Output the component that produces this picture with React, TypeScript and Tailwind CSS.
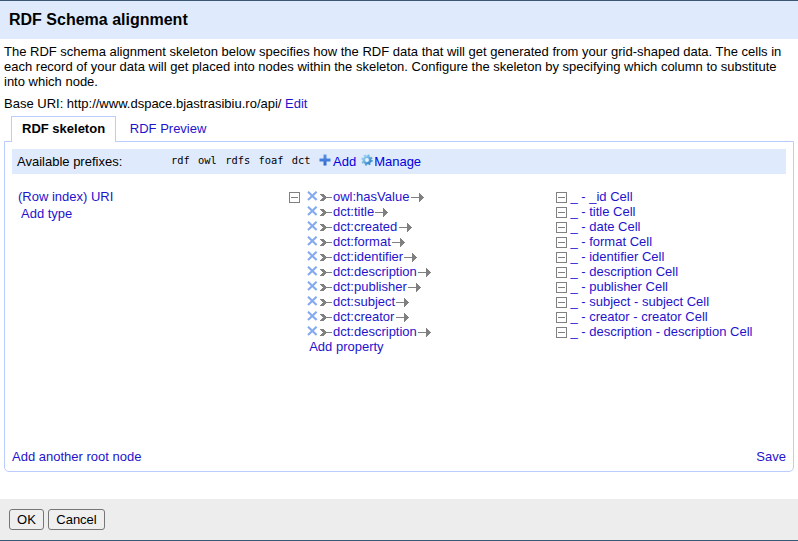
import React from "react";

const rows: { property: string; cell: string }[] = [
  { property: "owl:hasValue", cell: "_ - _id Cell" },
  { property: "dct:title", cell: "_ - title Cell" },
  { property: "dct:created", cell: "_ - date Cell" },
  { property: "dct:format", cell: "_ - format Cell" },
  { property: "dct:identifier", cell: "_ - identifier Cell" },
  { property: "dct:description", cell: "_ - description Cell" },
  { property: "dct:publisher", cell: "_ - publisher Cell" },
  { property: "dct:subject", cell: "_ - subject - subject Cell" },
  { property: "dct:creator", cell: "_ - creator - creator Cell" },
  { property: "dct:description", cell: "_ - description - description Cell" },
];

const prefixes = ["rdf", "owl", "rdfs", "foaf", "dct"];

function CollapseIcon() {
  return (
    <svg className="mt-[3px] block h-[11px] w-[11px] shrink-0" viewBox="0 0 11 11" shapeRendering="crispEdges">
      <path d="M0 0H11V11H0ZM1 1V10H10V1Z" fill="#808080" fillRule="evenodd" />
      <path d="M2 5H9V6H2Z" fill="#808080" />
    </svg>
  );
}

function RemoveIcon() {
  return (
    <svg className="mt-[2px] block h-[10px] w-[11px] shrink-0" viewBox="0 0 11 10">
      <path d="M1 0.7L9.6 9.1M9.6 0.7L1 9.1" stroke="#85aaf0" strokeWidth="2.1" fill="none" />
    </svg>
  );
}

function ArrowStart() {
  return (
    <svg className="ml-[2px] mt-[5px] block h-[7px] w-[12px] shrink-0" viewBox="0 0 12 7" shapeRendering="crispEdges">
      <path d="M0 0H4V1H5V2H6V3H12V4H6V5H5V6H4V7H0V6H1V5H2V4H3V3H2V2H1V1H0Z" fill="#808080" />
    </svg>
  );
}

function ArrowEnd() {
  return (
    <svg className="ml-[1.25px] mt-[4px] block h-[9px] w-[13px] shrink-0" viewBox="0 0 13 9" shapeRendering="crispEdges">
      <path d="M0 4H8V0H9V1H10V2H11V3H12V4H13V5H12V6H11V7H10V8H9V9H8V5H0Z" fill="#808080" />
    </svg>
  );
}

function PlusIcon() {
  return (
    <svg className="block h-[12px] w-[12px] shrink-0" viewBox="0 0 12 12">
      <defs>
        <linearGradient id="plus" x1="0" y1="0" x2="0" y2="1">
          <stop offset="0" stopColor="#5c96e6" />
          <stop offset="1" stopColor="#2d66cf" />
        </linearGradient>
      </defs>
      <path d="M4.5 0.5H7.5V4.5H11.5V7.5H7.5V11.5H4.5V7.5H0.5V4.5H4.5Z" fill="url(#plus)" />
    </svg>
  );
}

function GearIcon() {
  return (
    <svg className="block h-[12px] w-[12px] shrink-0" viewBox="0 0 12 12">
      <defs>
        <linearGradient id="gear" x1="0" y1="0" x2="1" y2="1">
          <stop offset="0" stopColor="#9bd2f3" />
          <stop offset="1" stopColor="#2f86c6" />
        </linearGradient>
      </defs>
      <circle cx="6" cy="6" r="4.9" fill="none" stroke="url(#gear)" strokeWidth="1.6" strokeDasharray="1.9 1.95" />
      <circle cx="6" cy="6" r="3.2" fill="none" stroke="url(#gear)" strokeWidth="2.6" />
      <circle cx="6" cy="6" r="1.5" fill="#e8f5fd" />
    </svg>
  );
}

export default function App() {
  return (
    <div className="flex h-[541px] w-[798px] flex-col overflow-hidden border-y border-[#3a5774] bg-white font-['Liberation_Sans',Arial,sans-serif] text-[13px] leading-[15px] text-black">
      <header className="h-[38px] shrink-0 bg-[#dfebfd] px-[9px] pt-[9px] text-[16px] leading-[19px] font-bold">
        RDF Schema alignment
      </header>

      <main className="flex grow flex-col px-[4px] pt-[5px]">
        <p>
          The RDF schema alignment skeleton below specifies how the RDF data that will get generated from your
          grid-shaped data. The cells in each record of your data will get placed into nodes within the skeleton.
          Configure the skeleton by specifying which column to substitute into which node.
        </p>
        <p className="mt-[7px]">
          Base URI: http://www.dspace.bjastrasibiu.ro/api/ <a className="text-[#1f13cc]">Edit</a>
        </p>

        <nav className="mt-[5px] flex h-[25px] shrink-0 pl-[7px]">
          <a className="z-10 h-[26px] w-[105px] border border-b-0 border-[#bbccff] bg-white pt-[4px] pl-[10px] font-bold">
            RDF skeleton
          </a>
          <a className="pt-[5px] pl-[13.8px] text-[#1f13cc]">RDF Preview</a>
        </nav>

        <section className="flex h-[331px] w-[790px] shrink-0 flex-col rounded-b-[5px] border border-[#bbccff] px-[7px] pt-[7px]">
          <div className="flex h-[25px] shrink-0 bg-[#dfebfd] pt-[5px] pl-[5px]">
            <span className="w-[154px]">Available prefixes:</span>
            <div className="mt-[-1px] flex w-[140px] gap-[8.3px] font-['DejaVu_Sans_Mono',monospace] text-[10.4px]">
              {prefixes.map((p) => (
                <span key={p}>{p}</span>
              ))}
            </div>
            <a className="ml-[8px] flex text-[#0000e0]">
              <PlusIcon />
              <span className="ml-[2px]">Add</span>
            </a>
            <a className="ml-[4.6px] flex text-[#0000e0]">
              <GearIcon />
              <span className="ml-[1.4px]">Manage</span>
            </a>
          </div>

          <div className="mt-[15px] flex grow text-[#1f13cc]">
            <div className="w-[277px] pl-[6px]">
              <div>(Row index) URI</div>
              <div className="mt-[2px] pl-[3px]">Add type</div>
            </div>
            <CollapseIcon />
            <div className="ml-[7px] w-[249px]">
              {rows.map((r, i) => (
                <div key={i} className="flex h-[15px]">
                  <RemoveIcon />
                  <ArrowStart />
                  <span className="ml-px">{r.property}</span>
                  <ArrowEnd />
                </div>
              ))}
              <div className="pl-[2.2px]">Add property</div>
            </div>
            <div>
              {rows.map((r, i) => (
                <div key={i} className="flex h-[15px]">
                  <CollapseIcon />
                  <span className="ml-[3.4px]">{r.cell}</span>
                </div>
              ))}
            </div>
          </div>

          <div className="mb-[7px] flex justify-between text-[#1f13cc]">
            <a>Add another root node</a>
            <a>Save</a>
          </div>
        </section>
      </main>

      <footer className="flex h-[41px] shrink-0 gap-[4px] bg-[#ededed] pt-[10px] pl-[9px]">
        <button className="h-[21px] w-[35px] rounded-[3px] border border-[#767676] bg-[#efefef] text-center">OK</button>
        <button className="h-[21px] w-[57px] rounded-[3px] border border-[#767676] bg-[#efefef] text-center">
          Cancel
        </button>
      </footer>
    </div>
  );
}
